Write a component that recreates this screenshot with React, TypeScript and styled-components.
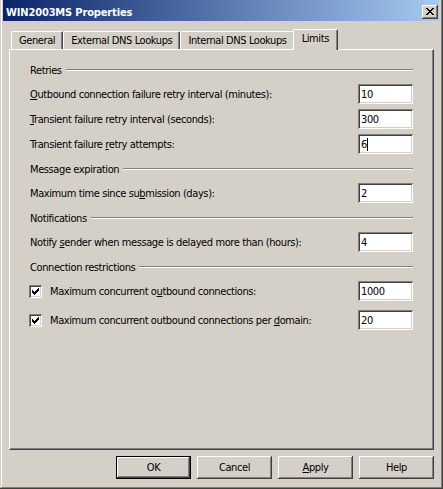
import React from "react";
import styled, { createGlobalStyle, css } from "styled-components";

const GlobalStyle = createGlobalStyle`
  html, body { margin: 0; padding: 0; background: #d4d0c8; }
  body { font-family: "DejaVu Sans Condensed", "Liberation Sans", Arial, sans-serif; font-size: 11px; color: #000; }
  * { box-sizing: border-box; }
`;

const FACE = "#d4d0c8";
const SHADOW = "#808080";
const DARK = "#404040";
const LIGHT = "#ffffff";

const raised = css`
  background: ${FACE};
  box-shadow: inset -1px -1px ${DARK}, inset 1px 1px ${LIGHT}, inset -2px -2px ${SHADOW}, inset 2px 2px ${FACE};
`;

const sunken = css`
  box-shadow: inset 1px 1px ${SHADOW}, inset -1px -1px ${LIGHT}, inset 2px 2px ${DARK}, inset -2px -2px ${FACE};
`;

const Window = styled.div`
  width: 443px;
  height: 489px;
  background: ${FACE};
  display: flex;
  flex-direction: column;
  padding: 0 4px 4px 3px;
  box-shadow: inset -1px -1px ${DARK}, inset 1px 0 ${FACE}, inset -2px -2px ${SHADOW}, inset 2px 0 ${LIGHT};
  font-family: "DejaVu Sans Condensed", "Liberation Sans", Arial, sans-serif;
  font-size: 11px;
  letter-spacing: -0.4px;
  color: #000;
`;

const TitleBar = styled.div`
  flex: none;
  height: 21px;
  display: flex;
  align-items: flex-start;
  padding: 0 1px 0 3px;
  background: linear-gradient(to right, #0a246a, #a6caf0);
`;

const Title = styled.div`
  flex: 1;
  color: #fff;
  font-weight: bold;
  letter-spacing: -0.15px;
  line-height: 19px;
  padding-top: 3px;
  white-space: nowrap;
`;

const CloseButton = styled.div`
  ${raised};
  flex: none;
  width: 16px;
  height: 14px;
  margin-top: 5px;
  display: flex;
  align-items: flex-start;
  justify-content: flex-start;
  padding: 3px 0 0 4px;
`;

const Body = styled.div`
  flex: 1;
  display: flex;
  flex-direction: column;
  padding: 8px 5px 0 6px;
`;

const TabStrip = styled.div`
  flex: none;
  height: 20px;
  display: flex;
  align-items: flex-end;
  padding-left: 2px;
  position: relative;
  z-index: 1;
`;

const Tab = styled.div<{ $selected?: boolean }>`
  position: relative;
  height: 18px;
  padding: 2px 7px 0 7px;
  line-height: 14px;
  white-space: nowrap;
  background: ${FACE};
  border-top: 1px solid ${LIGHT};
  border-left: 1px solid ${LIGHT};
  border-right: 1px solid ${DARK};
  border-radius: 2px 2px 0 0;
  box-shadow: inset -1px 0 ${SHADOW};
  ${(p) =>
    p.$selected &&
    css`
      z-index: 2;
      height: 21px;
      margin: 0 -2px -1px -2px;
      padding: 2px 8px 0 8px;
    `}
`;

const Panel = styled.div`
  flex: 1;
  display: flex;
  flex-direction: column;
  gap: 8px;
  padding: 13px 20px 0 20px;
  border-top: 1px solid ${LIGHT};
  border-left: 1px solid ${LIGHT};
  border-right: 1px solid ${DARK};
  border-bottom: 1px solid ${DARK};
  box-shadow: inset -1px -1px ${SHADOW};
`;

const Group = styled.div`
  display: flex;
  flex-direction: column;
  gap: 7px;
`;

const GroupHeading = styled.div`
  height: 14px;
  display: flex;
  align-items: center;
  gap: 4px;
  white-space: nowrap;
  &::after {
    content: "";
    flex: 1;
    height: 0;
    border-top: 1px solid ${SHADOW};
    border-bottom: 1px solid ${LIGHT};
  }
`;

const Rows = styled.div<{ $gap: number }>`
  display: flex;
  flex-direction: column;
  gap: ${(p) => p.$gap}px;
`;

const Row = styled.div`
  height: 20px;
  display: flex;
  align-items: center;
  justify-content: space-between;
  white-space: nowrap;
`;

const Key = styled.span`
  text-decoration: underline;
`;

const TextBox = styled.div`
  ${sunken};
  width: 55px;
  height: 20px;
  background: #fff;
  display: flex;
  align-items: center;
  padding: 1px 3px 0 3px;
`;

const Caret = styled.span`
  display: inline-block;
  width: 1px;
  height: 13px;
  background: #000;
`;

const CheckLabel = styled.label`
  display: flex;
  align-items: center;
  gap: 8px;
  margin-left: -1px;
`;

const CheckBox = styled.span`
  ${sunken};
  width: 13px;
  height: 13px;
  background: #fff;
  display: block;
  flex: none;
  position: relative;
  & > svg {
    position: absolute;
    left: 3px;
    top: 3px;
  }
`;

const Footer = styled.div`
  flex: none;
  display: flex;
  justify-content: flex-end;
  gap: 6px;
  padding: 6px 0;
`;

const PushButton = styled.div<{ $default?: boolean }>`
  ${raised};
  width: 75px;
  height: 23px;
  display: flex;
  align-items: center;
  justify-content: center;
  ${(p) =>
    p.$default &&
    css`
      border: 1px solid #000;
    `}
`;

const CheckMark = () => (
  <svg width="7" height="7" viewBox="0 0 7 7" shapeRendering="crispEdges">
    {[2, 3, 4, 3, 2, 1, 0].map((y, x) => (
      <rect key={x} x={x} y={y} width="1" height="3" fill="#000" />
    ))}
  </svg>
);

const CloseGlyph = () => (
  <svg width="8" height="7" viewBox="0 0 8 7" shapeRendering="crispEdges">
    {[
      [0, 6],
      [1, 5],
      [2, 4],
      [3, 3],
      [2, 4],
      [1, 5],
      [0, 6],
    ].map(([a, b], y) => (
      <g key={y}>
        <rect x={a} y={y} width="2" height="1" fill="#000" />
        <rect x={b} y={y} width="2" height="1" fill="#000" />
      </g>
    ))}
  </svg>
);

const tabs = [
  { label: "General" },
  { label: "External DNS Lookups" },
  { label: "Internal DNS Lookups" },
  { label: "Limits", selected: true },
];

export default function App() {
  return (
    <>
      <GlobalStyle />
      <Window>
        <TitleBar>
          <Title>WIN2003MS Properties</Title>
          <CloseButton>
            <CloseGlyph />
          </CloseButton>
        </TitleBar>
        <Body>
          <TabStrip>
            {tabs.map((t) => (
              <Tab key={t.label} $selected={t.selected}>
                {t.label}
              </Tab>
            ))}
          </TabStrip>
          <Panel>
            <Group>
              <GroupHeading>Retries</GroupHeading>
              <Rows $gap={5}>
                <Row>
                  <span>
                    <Key>O</Key>utbound connection failure retry interval (minutes):
                  </span>
                  <TextBox>10</TextBox>
                </Row>
                <Row>
                  <span>
                    <Key>T</Key>ransient failure retry interval (seconds):
                  </span>
                  <TextBox>300</TextBox>
                </Row>
                <Row>
                  <span>
                    Transient failure <Key>r</Key>etry attempts:
                  </span>
                  <TextBox>
                    6<Caret />
                  </TextBox>
                </Row>
              </Rows>
            </Group>
            <Group>
              <GroupHeading>Message expiration</GroupHeading>
              <Rows $gap={5}>
                <Row>
                  <span>
                    Maximum time since su<Key>b</Key>mission (days):
                  </span>
                  <TextBox>2</TextBox>
                </Row>
              </Rows>
            </Group>
            <Group>
              <GroupHeading>Notifications</GroupHeading>
              <Rows $gap={5}>
                <Row>
                  <span>
                    Notify <Key>s</Key>ender when message is delayed more than (hours):
                  </span>
                  <TextBox>4</TextBox>
                </Row>
              </Rows>
            </Group>
            <Group>
              <GroupHeading>Connection restrictions</GroupHeading>
              <Rows $gap={9}>
                <Row>
                  <CheckLabel>
                    <CheckBox>
                      <CheckMark />
                    </CheckBox>
                    <span>
                      Maximum concurrent o<Key>u</Key>tbound connections:
                    </span>
                  </CheckLabel>
                  <TextBox>1000</TextBox>
                </Row>
                <Row>
                  <CheckLabel>
                    <CheckBox>
                      <CheckMark />
                    </CheckBox>
                    <span>
                      Maximum concurrent outbound connections per <Key>d</Key>omain:
                    </span>
                  </CheckLabel>
                  <TextBox>20</TextBox>
                </Row>
              </Rows>
            </Group>
          </Panel>
          <Footer>
            <PushButton $default>OK</PushButton>
            <PushButton>Cancel</PushButton>
            <PushButton>
              <span>
                <Key>A</Key>pply
              </span>
            </PushButton>
            <PushButton>Help</PushButton>
          </Footer>
        </Body>
      </Window>
    </>
  );
}
